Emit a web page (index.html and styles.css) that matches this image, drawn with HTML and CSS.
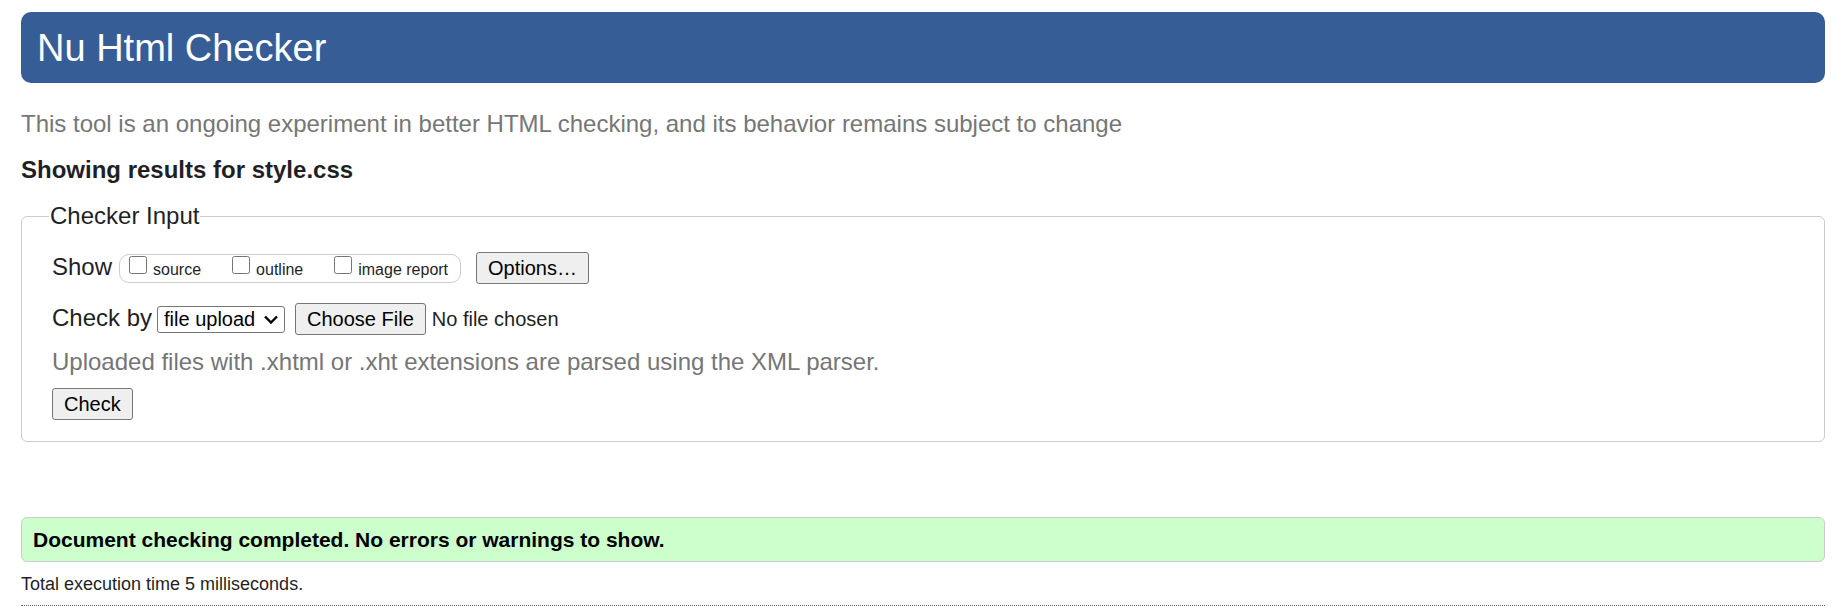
FILE: index.html
```html
<!DOCTYPE html>
<html lang="en">
<head>
<meta charset="utf-8">
<title>Nu Html Checker</title>
<link rel="stylesheet" href="styles.css">
</head>
<body>
<header class="banner"><h1 class="banner-title">Nu Html Checker</h1></header>
<main>
  <p class="notice">This tool is an ongoing experiment in better HTML checking, and its behavior remains subject to change</p>
  <h2 class="subject">Showing results for style.css</h2>
  <form class="checker-form">
    <fieldset class="checker-input">
      <legend class="checker-legend">Checker Input</legend>
      <div class="row show-row">
        <span id="show-label">Show</span>
        <div class="show-options" role="group" aria-labelledby="show-label">
          <label class="show-option"><input class="tick" type="checkbox" name="source">source</label>
          <label class="show-option"><input class="tick" type="checkbox" name="outline">outline</label>
          <label class="show-option"><input class="tick" type="checkbox" name="image-report">image report</label>
        </div>
        <button class="button" type="button">Options…</button>
      </div>
      <div class="row method-row">
        <label for="method">Check by</label>
        <select class="method" id="method"><option>file upload</option><option>address</option><option>text input</option></select>
        <input class="file" type="file" aria-label="File to check">
      </div>
      <p class="hint">Uploaded files with .xhtml or .xht extensions are parsed using the XML parser.</p>
      <button class="button" type="button">Check</button>
    </fieldset>
  </form>
  <p class="success">Document checking completed. No errors or warnings to show.</p>
  <p class="timing">Total execution time 5 milliseconds.</p>
</main>
<hr class="divider">
</body>
</html>
```
FILE: styles.css
```css
* {
  box-sizing: border-box;
}

body {
  margin: 0;
  padding: 12px 15px 0 21px;
  background: #fff;
  color: #1f1f26;
  font: 24px/28px Arial, "Liberation Sans", sans-serif;
}

.banner {
  padding: 15px 16px 13px;
  border-radius: 10px;
  background: #365d95;
  color: #fff;
}

.banner-title {
  margin: 0;
  font-size: 38px;
  font-weight: normal;
  line-height: 43px;
}

.notice {
  margin: 27px 0 18px;
  color: #767676;
}

.subject {
  margin: 0 0 18px;
  font-size: 24px;
}

.checker-input {
  margin: 0;
  min-width: 0;
  padding: 22px 30px 21px;
  border: 1px solid #ccc;
  border-radius: 6px;
}

.checker-legend {
  margin-left: -3px;
  padding: 0 1px;
}

.row {
  display: flex;
  align-items: baseline;
}

.show-options {
  display: flex;
  gap: 31px;
  margin: 0 15px 0 7px;
  padding: 1px 12px 0 9px;
  border: 1px solid #ccc;
  border-radius: 10px;
  font-size: 16px;
  line-height: 24px;
}

.tick {
  width: 18px;
  height: 18px;
  margin: 0 6px 0 0;
  vertical-align: 1px;
}

.button,
.file::file-selector-button {
  padding: 1px 11px;
  border: 1px solid #767676;
  border-radius: 3px;
  background: #efefef;
  color: #000;
  font: 20px/28px Arial, "Liberation Sans", sans-serif;
}

.button {
  display: block;
}

.method-row {
  margin: 19px 0 13px;
}

.method {
  appearance: none;
  height: 27px;
  margin: 0 10px 0 5px;
  padding: 0 28px 0 6px;
  border: 1px solid #767676;
  border-radius: 3px;
  background: #fff url("data:image/svg+xml,%3Csvg xmlns='http://www.w3.org/2000/svg' width='14' height='9' viewBox='0 0 14 9'%3E%3Cpath d='M1 1.5 7 7.5l6-6' fill='none' stroke='%23000' stroke-width='2.4'/%3E%3C/svg%3E") no-repeat right 6px center;
  color: #000;
  font: 20px/25px Arial, "Liberation Sans", sans-serif;
}

.file {
  font: 20px/28px Arial, "Liberation Sans", sans-serif;
}

.file::file-selector-button {
  margin: 0 6px 0 0;
}

.hint {
  margin: 0 0 12px;
  color: #767676;
}

.success {
  margin: 75px 0 10px;
  padding: 9px 11px;
  border: 1px solid #ccc;
  border-radius: 6px;
  background: #cfc;
  color: #000;
  font-size: 21px;
  font-weight: bold;
  line-height: 25px;
}

.timing {
  margin: 0 0 9px;
  font-size: 18px;
  line-height: 24px;
}

.divider {
  margin: 0;
  border: 0;
  border-top: 1px dotted #666;
}
```
